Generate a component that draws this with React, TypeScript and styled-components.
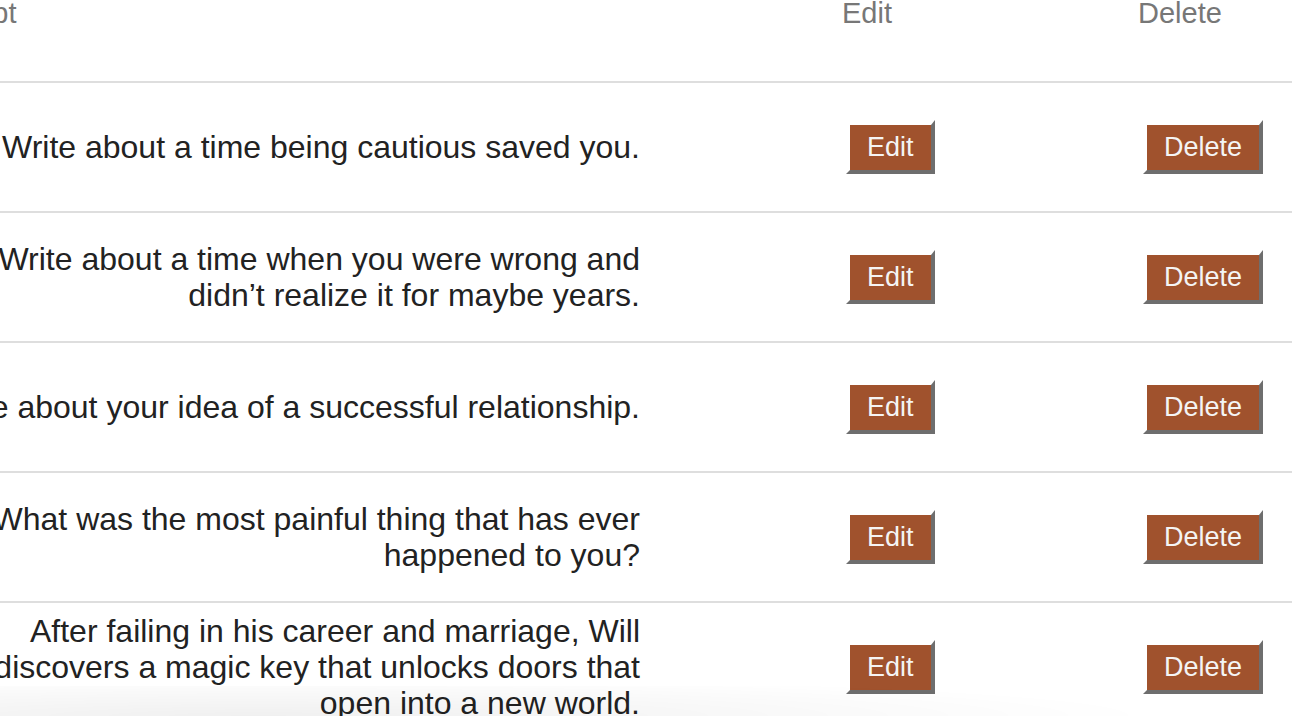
import React from "react";
import styled, { createGlobalStyle } from "styled-components";

const GlobalStyle = createGlobalStyle`
  html, body {
    margin: 0;
    padding: 0;
    overflow: hidden;
    background: #ffffff;
  }
  body {
    font-family: "Liberation Sans", Arial, Helvetica, sans-serif;
    color: #222222;
  }
`;

const Page = styled.div`
  margin-top: -5px;
  margin-left: -77px;
  width: calc(100% + 77px);
`;

const Row = styled.div<{ $header?: boolean }>`
  display: grid;
  grid-template-columns: 717px 498px 1fr;
  align-items: ${(p) => (p.$header ? "start" : "center")};
  min-height: ${(p) => (p.$header ? "auto" : "128px")};
  border-bottom: 2px solid #dedede;
`;

const HeadCell = styled.div<{ $indent?: number }>`
  font-size: 29px;
  line-height: 36px;
  color: #777777;
  padding-left: ${(p) => p.$indent ?? 0}px;
  padding-bottom: 50px;
  text-align: left;
`;

const PromptCell = styled.div`
  font-size: 32px;
  line-height: 36px;
  color: #222222;
  text-align: right;
`;

const ActionCell = styled.div<{ $indent: number }>`
  padding-left: ${(p) => p.$indent}px;
  display: flex;
  align-items: center;
`;

const ActionButton = styled.button`
  font-family: "Liberation Sans", Arial, Helvetica, sans-serif;
  font-size: 27px;
  line-height: 45px;
  height: 54px;
  padding: 0 17px;
  margin: 0;
  color: #f4f4f4;
  background: #a0522d;
  border-style: solid;
  border-width: 5px 4px 4px 4px;
  border-color: #ffffff #6e6e6e #6e6e6e #ffffff;
  cursor: pointer;
`;

const BottomShade = styled.div`
  position: fixed;
  left: 0;
  right: 0;
  bottom: 0;
  height: 30px;
  pointer-events: none;
  background: radial-gradient(
    ellipse 900px 40px at 20% 100%,
    rgba(0, 0, 0, 0.06),
    rgba(0, 0, 0, 0) 100%
  );
`;

const prompts = [
  "Write about a time being cautious saved you.",
  "Write about a time when you were wrong and didn\u2019t realize it for maybe years.",
  "Write about your idea of a successful relationship.",
  "What was the most painful thing that has ever happened to you?",
  "After failing in his career and marriage, Will discovers a magic key that unlocks doors that open into a new world.",
];

export default function App() {
  return (
    <>
      <GlobalStyle />
      <Page>
        <Row $header>
          <HeadCell>Prompt</HeadCell>
          <HeadCell $indent={202}>Edit</HeadCell>
          <HeadCell>Delete</HeadCell>
        </Row>
        {prompts.map((text) => (
          <Row key={text}>
            <PromptCell>{text}</PromptCell>
            <ActionCell $indent={206}>
              <ActionButton type="button">Edit</ActionButton>
            </ActionCell>
            <ActionCell $indent={5}>
              <ActionButton type="button">Delete</ActionButton>
            </ActionCell>
          </Row>
        ))}
      </Page>
      <BottomShade />
    </>
  );
}
